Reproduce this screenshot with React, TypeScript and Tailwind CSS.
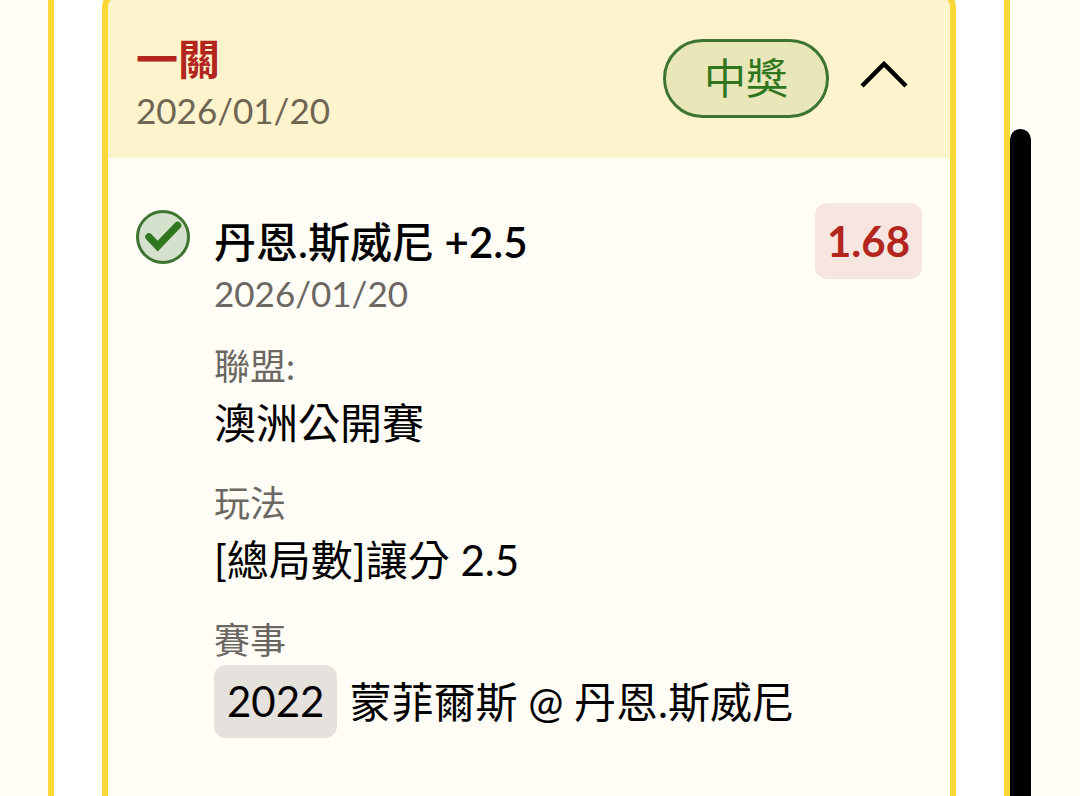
import { useState } from 'react';

interface Field {
  label: string;
  value: string;
  badge?: string;
}

const FIELDS: Field[] = [
  { label: '聯盟:', value: '澳洲公開賽' },
  { label: '玩法', value: '[總局數]讓分 2.5' },
  { label: '賽事', value: '蒙菲爾斯 @ 丹恩.斯威尼', badge: '2022' },
];

function CheckIcon() {
  return (
    <svg viewBox="0 0 54 54" className="w-[54px] h-[54px] shrink-0" fill="none">
      <circle cx="27" cy="27" r="25.5" fill="#d5e1cc" stroke="#3c7430" strokeWidth="3" />
      <path d="M13 27 L21.7 36 L41.5 15.5" stroke="#2f761f" strokeWidth="7.5" strokeLinecap="round" />
    </svg>
  );
}

function ChevronUp() {
  return (
    <svg viewBox="0 0 48 28" className="w-12 h-7" fill="none">
      <path d="M2 26 L24 4 L46 26" stroke="#000" strokeWidth="4.5" />
    </svg>
  );
}

function FieldRow({ label, value, badge }: Field) {
  return (
    <div>
      <dt className="text-[36px] leading-[50px] text-[#6b6763]">{label}</dt>
      <dd className="flex items-center gap-3 whitespace-nowrap text-[42px] leading-[64px] text-black">
        {badge && (
          <span className="rounded-xl bg-[#e5e1dd] px-[13px] py-[6px] leading-[61px]">{badge}</span>
        )}
        {value}
      </dd>
    </div>
  );
}

export default function App() {
  const [open, setOpen] = useState(true);

  return (
    <div className="relative h-screen overflow-hidden bg-[#fffdf5] pl-12 pr-[70px] font-['Lato','Noto_Sans_CJK_TC',sans-serif]">
      <main className="h-full overflow-hidden border-x-[6px] border-[#f8d937] bg-white px-12">
        <section className="-mt-[9px] min-h-[110vh] overflow-hidden rounded-2xl border-[6px] border-[#f8d937] bg-[#fffdf5]">
          <header className="flex items-center justify-between bg-[#fdf3cd] px-7 pb-7 pt-[30px]">
            <div>
              <h2 className="text-[42px] font-bold leading-[64px] text-[#b3261e]">一關</h2>
              <time className="block text-[35px] leading-[39px] text-[#6e6552]">2026/01/20</time>
            </div>
            <div className="flex items-center gap-[31px]">
              <span className="rounded-full border-[3px] border-[#3c7430] bg-[#e9e6b9] px-[38px] py-[6px] text-[42px] leading-[61px] text-[#2f761f]">
                中獎
              </span>
              <button
                type="button"
                aria-label="收合"
                aria-expanded={open}
                onClick={() => setOpen(!open)}
                className="mr-[14px] pb-[10px]"
              >
                <ChevronUp />
              </button>
            </div>
          </header>

          {open && (
            <div className="px-7 pt-[45px]">
              <div className="flex items-start gap-6">
                <div className="pt-[7px]">
                  <CheckIcon />
                </div>
                <div className="min-w-0 flex-1 pt-[7px]">
                  <h3 className="text-[42px] font-medium leading-[64px] text-black">
                    丹恩.斯威尼 <span className="font-semibold">+2.5</span>
                  </h3>
                  <time className="block text-[35px] leading-[39px] text-[#6b6763]">2026/01/20</time>
                  <dl className="mt-7 flex flex-col gap-[23px]">
                    {FIELDS.map((f) => (
                      <FieldRow key={f.label} {...f} />
                    ))}
                  </dl>
                </div>
                <span className="rounded-xl bg-[#f7e6e0] px-3 py-2 text-[42px] font-bold leading-[60px] text-[#b3261e]">
                  1.68
                </span>
              </div>
            </div>
          )}
        </section>
      </main>

      {/* Scroll thumb */}
      <div className="absolute -bottom-4 right-[49px] top-[129px] w-[21px] rounded-full bg-black" />
    </div>
  );
}
